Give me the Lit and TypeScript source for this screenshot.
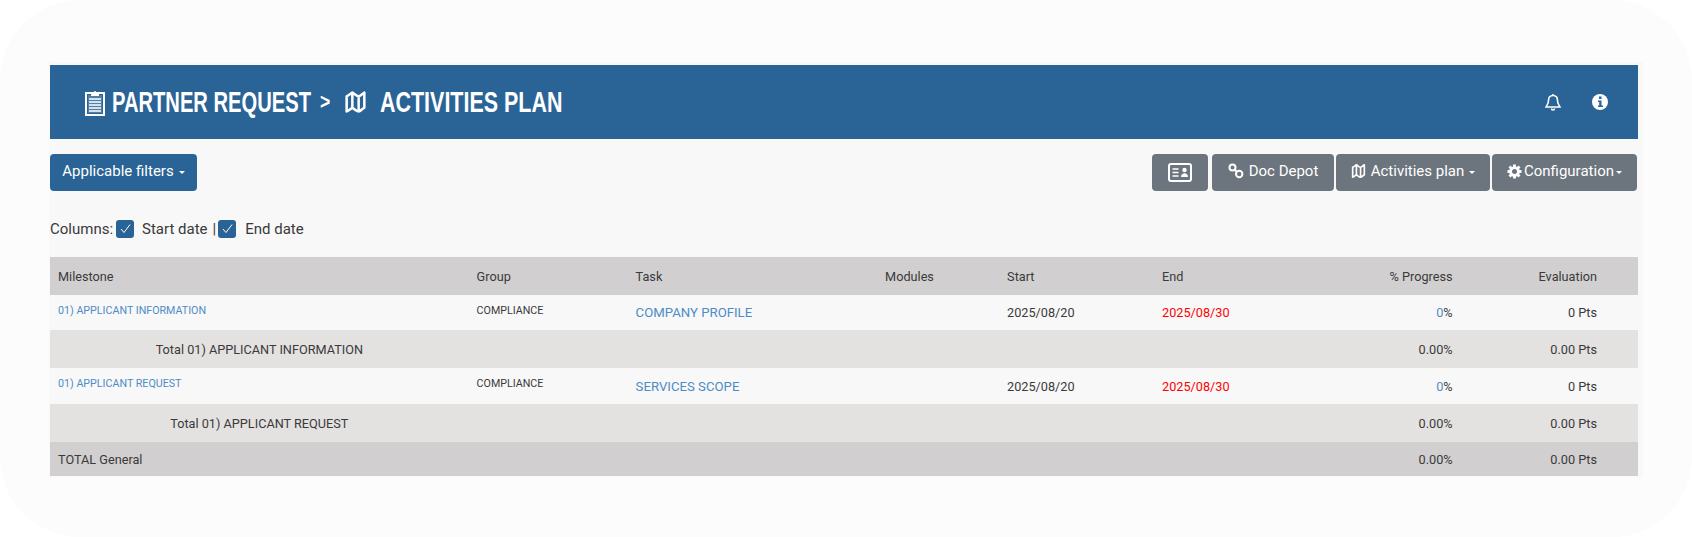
import { html, LitElement, css, svg } from 'lit';
import { customElement } from 'lit/decorators.js';

const mapIcon = svg`<path d="M2 5C4 4 5 3 6.500 2 8 3 10 5 11.500 5 13 5 14 3 16 2V14C14 15 13 17 11.500 17 10 17 8 15 6.500 14 5 15 4 16 2 17Z M6.500 2V14 M11.500 5V17" fill="none" stroke="currentColor" stroke-width="2" stroke-linejoin="round"/>`;

const cogTeeth = [0, 45, 90, 135, 180, 225, 270, 315];

@customElement('app-root')
export class AppRoot extends LitElement {
  static styles = css`
    :host {
      display: block;
      width: 1692px;
      height: 537px;
      background: #fff;
      font-family: 'Roboto', 'Liberation Sans', sans-serif;
      color: #3a3a3a;
    }

    .shell {
      height: 537px;
      box-sizing: border-box;
      background: #fcfcfc;
      border-radius: 80px;
      padding: 62px 49px 0 49px;
    }

    .panel {
      height: 415px;
      box-sizing: border-box;
      background: #f8f8f8;
      padding: 3px 5px 0 1px;
    }

    .header {
      height: 74px;
      background: #2a6496;
      color: #fff;
      display: flex;
      align-items: center;
      padding: 0 29px 0 35px;
    }

    .title {
      display: flex;
      align-items: center;
      font-family: 'Liberation Sans', sans-serif;
      font-weight: 700;
      font-size: 29px;
      flex: 1;
      white-space: nowrap;
    }

    .cond {
      display: inline-block;
      transform: scaleX(0.695);
      transform-origin: left center;
    }

    .cond-partner { width: 198px; margin-left: 7px; }
    .sep { width: 10px; margin-left: 10px; transform: scaleX(0.8); font-size: 22px; }
    .map { margin-left: 14px; }
    .cond-plan { width: 181px; margin-left: 13px; transform: scaleX(0.74); }

    .header-icons { display: flex; gap: 29px; }

    .toolbar {
      display: flex;
      justify-content: space-between;
      padding-top: 15px;
    }

    .btn {
      height: 37px;
      box-sizing: border-box;
      display: flex;
      align-items: center;
      justify-content: center;
      gap: 5px;
      padding-bottom: 3px;
      border-radius: 4px;
      color: #fff;
      font-size: 15px;
      white-space: nowrap;
    }

    .btn-primary { background: #2a6496; width: 147px; }
    .btn-grey { background: #6c757d; }
    .actions { display: flex; gap: 2px; margin-right: 1px; }
    .icon-btn { width: 56px; padding-bottom: 0; margin-right: 2px; }
    .doc-btn { width: 122px; }
    .plan-btn { width: 154px; }
    .config-btn { width: 145px; gap: 2px; }

    .caret {
      width: 0;
      height: 0;
      border-left: 3px solid transparent;
      border-right: 3px solid transparent;
      border-top: 3px solid #fff;
      margin-top: 3px;
    }

    .columns {
      display: flex;
      align-items: center;
      height: 19px;
      margin-top: 28px;
      margin-bottom: 19px;
      font-size: 15px;
      white-space: nowrap;
    }

    .check {
      width: 18px;
      height: 18px;
      background: #2a6496;
      border-radius: 3px;
      display: flex;
      align-items: center;
      justify-content: center;
      margin: 0 8px 0 3px;
    }

    .bar { margin-left: 5px; }
    .check-second { margin-left: 2px; margin-right: 9px; }

    table {
      width: 1588px;
      table-layout: fixed;
      border-collapse: collapse;
      font-size: 12.700px;
    }

    td, th {
      box-sizing: border-box;
      padding: 0 8px;
      font-weight: 400;
      text-align: left;
      white-space: nowrap;
    }

    .num { text-align: right; }
    .evaluation { padding-right: 41px; }
    .head th { height: 38px; background: #d1cfd0; }
    .row td { height: 35px; background: #f8f8f8; }
    .row.tall td { height: 36px; }
    .total td { height: 38px; background: #e4e1e1; }
    .grand td { height: 34px; background: #d1cfd0; }
    .center { text-align: center; }
    .link { color: #4d8cc7; }
    .row td.task { font-size: 13.200px; }
    .row td.small { font-size: 10.700px; padding-bottom: 5px; }
    .late { color: #f00; }
  `;

  private renderDataRow(milestone: string, task: string, cls = 'row') {
    return html`<tr class=${cls}>
      <td class="small link">${milestone}</td>
      <td class="small">COMPLIANCE</td>
      <td class="task link">${task}</td>
      <td></td>
      <td>2025/08/20</td>
      <td class="late">2025/08/30</td>
      <td class="num"><span class="link">0</span>%</td>
      <td class="num evaluation">0 Pts</td>
    </tr>`;
  }

  private renderTotal(label: string, cls: string, labelCls: string) {
    return html`<tr class=${cls}>
      <td class=${labelCls}>${label}</td>
      <td></td><td></td><td></td><td></td><td></td>
      <td class="num">0.00%</td>
      <td class="num evaluation">0.00 Pts</td>
    </tr>`;
  }

  private renderCheck(extra = '') {
    return html`<span class="check ${extra}"><svg width="13" height="13" viewBox="0 0 13 13"><path d="M2 7l3 3.500 6-8" fill="none" stroke="#fff" stroke-width="1"/></svg></span>`;
  }

  protected render() {
    return html`
      <div class="shell">
        <div class="panel">
          <div class="header">
            <div class="title">
              <svg width="20" height="27" viewBox="0 0 20 27"><path d="M1 4h18v22H1z" fill="none" stroke="#fff" stroke-width="2"/><path d="M3 6h14v18H3z" fill="#fff" opacity=".18"/><path d="M6 3h3a1 1 0 0 1 2 0h3v4H6z" fill="#fff"/><path d="M4 10h12M4 13h12M4 16h12M4 19h12M4 22h12" stroke="#fff" stroke-width="1.400"/></svg>
              <span class="cond cond-partner">PARTNER REQUEST</span>
              <span class="cond sep">&gt;</span>
              <svg class="map" width="23" height="24" viewBox="0 0 18 19">${mapIcon}</svg>
              <span class="cond cond-plan">ACTIVITIES PLAN</span>
            </div>
            <div class="header-icons">
              <svg width="18" height="18" viewBox="0 0 18 18"><path d="M9 2.500c-3 0-4.500 2-4.500 5 0 4-2 5-2.500 6.500h14c-.5-1.500-2.500-2.500-2.500-6.500 0-3-1.500-5-4.500-5Z M9 1v1.500 M7.500 15.500a1.500 1.500 0 0 0 3 0" fill="none" stroke="#fff" stroke-width="1.600"/></svg>
              <svg width="18" height="18" viewBox="0 0 18 18"><circle cx="9" cy="9" r="8" fill="#fff"/><path d="M8 3.500h2.500v2.500H8z M7 7.500h3.500v5H12V14H7v-1.500h1.200V9H7z" fill="#2a6496"/></svg>
            </div>
          </div>
          <div class="toolbar">
            <div class="btn btn-primary">Applicable filters <span class="caret"></span></div>
            <div class="actions">
              <div class="btn btn-grey icon-btn"><svg width="24" height="19" viewBox="0 0 24 19"><rect x="1" y="1" width="22" height="17" rx="2" fill="none" stroke="#fff" stroke-width="2"/><path d="M4.500 6h6M4.500 9.500h6M4.500 13h6" stroke="#fff" stroke-width="1.600"/><circle cx="16.500" cy="7" r="2.200" fill="#fff"/><path d="M13 14c0-5 7-5 7 0z" fill="#fff"/></svg></div>
              <div class="btn btn-grey doc-btn"><svg width="16" height="16" viewBox="0 0 16 16"><circle cx="4.500" cy="4.500" r="3" fill="none" stroke="#fff" stroke-width="2"/><circle cx="11.200" cy="11" r="3.200" fill="none" stroke="#fff" stroke-width="2"/><path d="M6.500 6.500l2.500 2.500" stroke="#fff" stroke-width="2"/></svg> Doc Depot</div>
              <div class="btn btn-grey plan-btn"><svg width="15" height="16" viewBox="0 0 18 19">${mapIcon}</svg> Activities plan <span class="caret"></span></div>
              <div class="btn btn-grey config-btn"><svg width="15" height="15" viewBox="0 0 16 16"><g fill="#fff">${cogTeeth.map((a) => svg`<rect x="6.500" y="0.500" width="3" height="4" transform="rotate(${a} 8 8)"/>`)}</g><circle cx="8" cy="8" r="4.200" fill="none" stroke="#fff" stroke-width="3"/></svg> Configuration<span class="caret"></span></div>
            </div>
          </div>
          <div class="columns">
            <span>Columns:</span>${this.renderCheck()}<span>Start date</span><span class="bar">|</span>${this.renderCheck('check-second')}<span>End date</span>
          </div>
          <table>
            <colgroup>
              <col style="width:418.600px" /><col style="width:159px" /><col style="width:249.500px" /><col style="width:122px" />
              <col style="width:155px" /><col style="width:155px" /><col style="width:151.500px" /><col style="width:177.400px" />
            </colgroup>
            <tr class="head"><th>Milestone</th><th>Group</th><th>Task</th><th>Modules</th><th>Start</th><th>End</th><th class="num">% Progress</th><th class="num evaluation">Evaluation</th></tr>
            ${this.renderDataRow('01) APPLICANT INFORMATION', 'COMPANY PROFILE')}
            ${this.renderTotal('Total 01) APPLICANT INFORMATION', 'total', 'center')}
            ${this.renderDataRow('01) APPLICANT REQUEST', 'SERVICES SCOPE', 'row tall')}
            ${this.renderTotal('Total 01) APPLICANT REQUEST', 'total', 'center')}
            ${this.renderTotal('TOTAL General', 'grand', '')}
          </table>
        </div>
      </div>
    `;
  }
}
